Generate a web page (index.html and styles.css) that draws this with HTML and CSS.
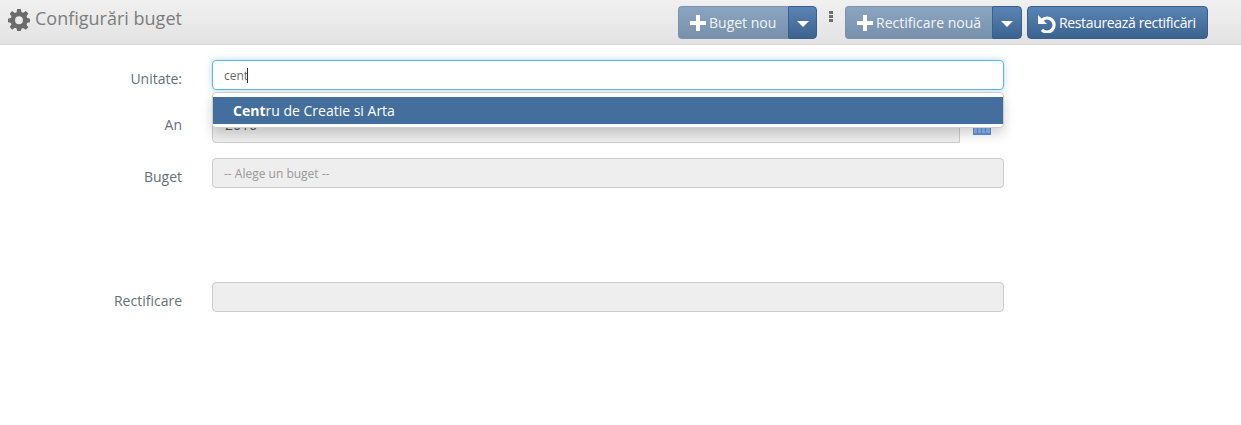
FILE: index.html
```html
<!DOCTYPE html>
<html lang="en">
<head>
  <meta charset="UTF-8">
  <title>Configurări buget</title>
  <link rel="stylesheet" href="styles.css">
</head>
<body>
  <div class="topbar">
    <h1 class="page-title">
      <svg class="gear" viewBox="0 0 24 24"><path fill-rule="evenodd" d="M10 0h4l.6 3.400 2 .8 2.800-2 2.800 2.800-2 2.800.8 2L24 10.500v4l-3 .6-.8 2 2 2.800-2.800 2.800-2.800-2-2 .8L14 24h-4l-.6-2.700-2-.8-2.800 2-2.800-2.800 2-2.800-.8-2L0 14.500v-4l3-.6.8-2-2-2.800L4.600 2.300l2.800 2 2-.8zM12 8a4.300 4.300 0 1 0 0 8.600A4.300 4.300 0 0 0 12 8z"/></svg>
      Configurări buget
    </h1>
    <div class="actions">
      <div class="btn-group">
        <button class="btn btn-faded btn-buget"><svg class="plus" viewBox="0 0 16 16"><path d="M6 0h4v6h6v4h-6v6H6v-6H0V6h6z"/></svg>Buget nou</button>
        <button class="btn btn-caret"><span class="caret"></span></button>
      </div>
      <div class="dots"><span></span><span></span><span></span></div>
      <div class="btn-group">
        <button class="btn btn-faded btn-rect"><svg class="plus" viewBox="0 0 16 16"><path d="M6 0h4v6h6v4h-6v6H6v-6H0V6h6z"/></svg>Rectificare nouă</button>
        <button class="btn btn-caret"><span class="caret"></span></button>
      </div>
      <button class="btn btn-solid"><svg class="undo" viewBox="0 0 18 18"><path fill="none" stroke="#fff" stroke-width="3.200" d="M4 5.200A7 7 0 1 1 4 14.800"/><path fill="#fff" d="M0 0v9h9z"/></svg><span class="restore-text">Restaurează rectificări</span></button>
    </div>
  </div>

  <form class="config-form">
    <div class="form-row row-unitate">
      <label>Unitate:</label>
      <div class="field">
        <div class="input input-focus">cent<span class="cursor"></span></div>
        <ul class="suggestions">
          <li><b>Cent</b>ru de Creatie si Arta</li>
        </ul>
      </div>
    </div>
    <div class="form-row row-an">
      <label>An</label>
      <div class="field field-date">
        <div class="input input-disabled input-year">2016</div>
        <svg class="calendar" viewBox="0 0 18 16"><path fill="#8fb5ea" d="M0 1h18v15H0z"/><path fill="#5b93e0" d="M0 14h18v2H0zM0 1h1v15H0zM17 1h1v15h-1zM4 1h1v13H4zM8 1h1v13H8zM12 1h1v13h-1z"/></svg>
      </div>
    </div>
    <div class="form-row row-buget">
      <label>Buget</label>
      <div class="field">
        <div class="input input-disabled input-placeholder">-- Alege un buget --</div>
      </div>
    </div>
    <div class="form-row row-rect">
      <label>Rectificare</label>
      <div class="field">
        <div class="input input-disabled"></div>
      </div>
    </div>
  </form>
</body>
</html>
```

FILE: styles.css
```css
body {
  margin: 0;
  font-family: "Open Sans", sans-serif;
  font-size: 14px;
  color: #555;
  background: #fff;
}
.topbar {
  display: flex;
  justify-content: space-between;
  height: 44px;
  background: linear-gradient(#f0f0f0, #e3e3e3);
  border-bottom: 1px solid #d6d6d6;
}
.page-title {
  display: flex;
  align-items: flex-start;
  margin: 0;
  padding: 6px 0 0 8px;
  font-size: 18px;
  line-height: 25px;
  font-weight: 400;
  color: #7d7d7d;
}
.gear { width: 22px; height: 22px; margin: 3px 5px 0 0; fill: #6b6b6b; }
.actions { display: flex; align-items: flex-start; padding: 6px 33px 0 0; }
.btn-group { display: flex; }
.btn {
  display: flex;
  align-items: center;
  height: 33px;
  box-sizing: border-box;
  padding: 0;
  border: 1px solid #35608f;
  border-radius: 4px;
  font-family: inherit;
  font-size: 14px;
  color: #fff;
}
.btn-faded {
  border-color: #7b93ad;
  border-radius: 4px 0 0 4px;
  border-right: 0;
  background: linear-gradient(#8ba5c2, #7890aa);
  color: #f2f5f8;
  padding-left: 11px;
}
.btn-buget { width: 110px; }
.btn-rect { width: 147px; }
.btn-caret {
  width: 29px;
  justify-content: center;
  border-radius: 0 4px 4px 0;
  background: linear-gradient(#5a84b3, #3b6390);
}
.dots + .btn-group .btn-caret { width: 30px; }
.caret {
  width: 0;
  height: 0;
  margin-top: 2px;
  border-left: 6px solid transparent;
  border-right: 6px solid transparent;
  border-top: 6px solid #fff;
}
.btn-solid {
  width: 181px;
  margin-left: 5px;
  padding-left: 10px;
  background: linear-gradient(#5a84b3, #3b6390);
}
.restore-text { letter-spacing: -0.35px; }
.plus { width: 16px; height: 16px; margin: 1px 3px 0 0; fill: #fff; flex: none; }
.undo { width: 18px; height: 18px; margin: 3px 3px 0 0; flex: none; }
.dots {
  display: flex;
  flex-direction: column;
  gap: 1px;
  width: 28px;
  align-items: center;
  padding-top: 5px;
}
.dots span { width: 4px; height: 3px; background: #6f6f6f; }

.config-form { width: 1004px; }
.form-row { display: flex; align-items: center; }
.row-unitate { margin-top: 15px; }
.row-an { margin-top: 23px; }
.row-buget { margin-top: 15px; }
.row-rect { margin-top: 94px; }
.form-row label {
  width: 182px;
  flex: none;
  text-align: right;
  color: #66707c;
  padding-top: 6px;
}
.row-an label { padding: 0 0 8px; }
.field { position: relative; display: flex; align-items: center; flex: 1; margin-left: 30px; }
.input {
  flex: 1;
  height: 30px;
  box-sizing: border-box;
  padding: 0 11px;
  border: 1px solid #ccc;
  border-radius: 4px;
  font-size: 12px;
  line-height: 30px;
}
.input-focus {
  border-color: #66afe9;
  box-shadow: 0 0 6px rgba(102, 175, 233, 0.5);
  color: #6a6a6a;
}
.cursor {
  display: inline-block;
  width: 1px;
  height: 15px;
  margin-left: -1px;
  background: #333;
  vertical-align: -3px;
}
.input-disabled { background: #eee; color: #555; }
.input-year { font-size: 14px; line-height: 22px; padding-left: 12px; border-radius: 4px 0 0 4px; }
.input-placeholder { color: #999; font-size: 12px; }
.calendar { width: 18px; height: 16px; margin: 0 13px 2px; flex: none; }
.suggestions {
  position: absolute;
  top: 32px;
  left: 0;
  right: 0;
  margin: 0;
  padding: 4px 0 3px;
  list-style: none;
  background: #fff;
  border: 1px solid #ccc;
  border-radius: 4px;
  box-shadow: 0 6px 12px rgba(0, 0, 0, 0.18);
  z-index: 2;
}
.suggestions li {
  height: 27px;
  padding-left: 20px;
  line-height: 27px;
  font-size: 14px;
  background: #446e9b;
  color: #fff;
}
```
